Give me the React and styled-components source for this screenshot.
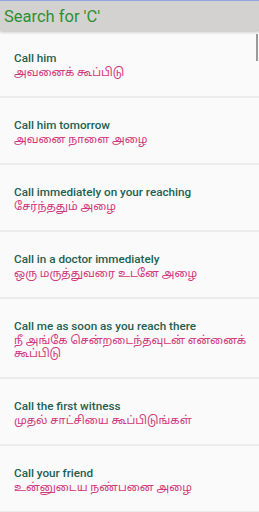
import React from 'react'
import styled, { createGlobalStyle } from 'styled-components'

const GlobalStyle = createGlobalStyle`
  body {
    margin: 0;
    padding: 0;
    background: #fafafa;
    font-family: Roboto, "Noto Sans", "Noto Sans Tamil", sans-serif;
  }
`

const Screen = styled.div`
  width: 259px;
  height: 512px;
  overflow: hidden;
  position: relative;
  background: #fafafa;
  border-top: 1px solid #8fa6e0;
  box-sizing: border-box;
`

const Header = styled.div`
  height: 30px;
  background: #d4d1d1;
  display: flex;
  align-items: center;
  padding-left: 4px;
  box-shadow: 0 1px 3px rgba(0, 0, 0, 0.25);
  position: relative;
  z-index: 1;
`

const Title = styled.h1`
  margin: 0;
  font-size: 16.5px;
  font-weight: 400;
  color: #2b9132;
`

const List = styled.ul`
  list-style: none;
  margin: 0;
  padding: 0;
`

const Row = styled.li`
  padding: 20px 8px 17px 14px;
  border-bottom: 2px solid #ececec;
`

const English = styled.p`
  margin: 0;
  font-size: 11.7px;
  line-height: 15px;
  font-weight: 500;
  color: #1f5f52;
`

const Tamil = styled.p`
  margin: 0;
  font-size: 11.3px;
  line-height: 13px;
  color: #d2387c;
`

const ScrollThumb = styled.div`
  position: absolute;
  right: 1px;
  top: 33px;
  width: 2px;
  height: 27px;
  background: #9a9a9a;
`

const phrases = [
  ['Call him', 'அவனைக் கூப்பிடு'],
  ['Call him tomorrow', 'அவனை நாளை அழை'],
  ['Call immediately on your reaching', 'சேர்ந்ததும் அழை'],
  ['Call in a doctor immediately', 'ஒரு மருத்துவரை உடனே அழை'],
  ['Call me as soon as you reach there', 'நீ அங்கே சென்றடைந்தவுடன் என்னைக் கூப்பிடு'],
  ['Call the first witness', 'முதல் சாட்சியை கூப்பிடுங்கள்'],
  ['Call your friend', 'உன்னுடைய நண்பனை அழை'],
]

const App = () => {
  return (
    <>
      <GlobalStyle />
      <Screen>
        <Header>
          <Title>Search for 'C'</Title>
        </Header>
        <List>
          {phrases.map(([en, ta]) => (
            <Row key={en}>
              <English>{en}</English>
              <Tamil>{ta}</Tamil>
            </Row>
          ))}
        </List>
        <ScrollThumb />
      </Screen>
    </>
  )
}

export default App
